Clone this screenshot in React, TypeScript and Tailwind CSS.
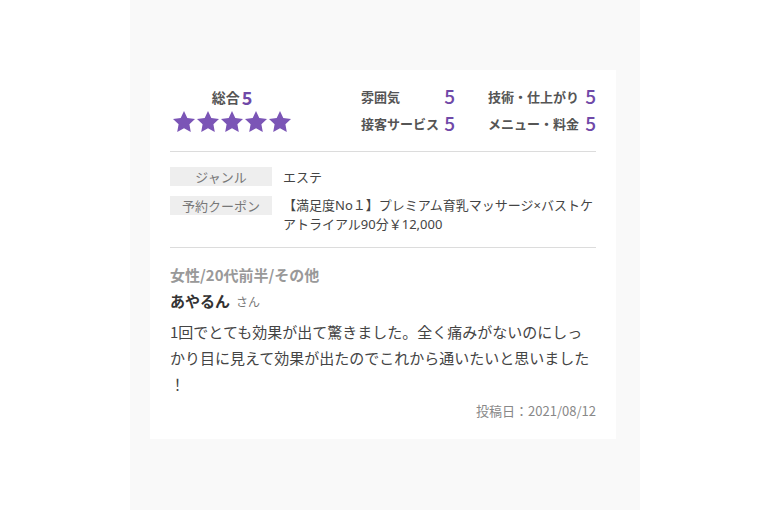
const FONT = { fontFamily: '"Noto Sans CJK JP", "Noto Sans", sans-serif' };
// Latin glyphs first so "×" and "No" come out narrow, as in the original
const MIXED_FONT = { fontFamily: '"Noto Sans", "Noto Sans CJK JP", sans-serif' };

const ratings = [
  { label: '雰囲気', score: 5 },
  { label: '技術・仕上がり', score: 5 },
  { label: '接客サービス', score: 5 },
  { label: 'メニュー・料金', score: 5 },
];

function StarIcon() {
  return (
    <svg viewBox="0 0 24 24" className="h-[24px] w-[24px]" aria-hidden>
      <polygon
        fill="#7b55b6"
        points="12,1 15.3,8 23,9 17.4,14.3 18.8,22 12,18.3 5.2,22 6.6,14.3 1,9 8.7,8"
      />
    </svg>
  );
}

export default function App() {
  return (
    <div className="flex min-h-[510px] w-full justify-center bg-white" style={FONT}>
      <div className="w-[510px] bg-[#f9f9f9] pt-[70px]">
        <div className="ml-5 w-[466px] bg-white px-5">
          {/* scores */}
          <div className="flex items-start border-b border-[#dcdcdc] pb-[14px] pt-[17px]">
            <div className="flex w-[124px] flex-col items-center">
              <div className="flex h-5 items-center">
                <span className="text-[14px] font-bold text-[#555]">総合</span>
                <span className="ml-[2px] text-[18px] font-semibold text-[#6f49a8]">5</span>
              </div>
              <div className="mt-[3px] flex">
                {[0, 1, 2, 3, 4].map((i) => (
                  <StarIcon key={i} />
                ))}
              </div>
            </div>
            <div className="-mt-1 ml-[67px] grid grid-cols-[94px_108px] gap-x-[33px]">
              {ratings.map((r) => (
                <div key={r.label} className="flex h-[27px] items-center justify-between">
                  <span className="text-[13px] font-bold text-[#555]">{r.label}</span>
                  <span className="text-[19px] font-medium text-[#6f49a8]">{r.score}</span>
                </div>
              ))}
            </div>
          </div>

          {/* genre / coupon */}
          <div className="flex flex-col gap-[10px] border-b border-[#dcdcdc] pb-[13px] pt-[15px] text-[13px] leading-[19px]">
            <div className="flex">
              <div className="w-[102px] shrink-0 bg-[#eeeeee] text-center text-[#777]">ジャンル</div>
              <div className="ml-[11px] text-[#444]">エステ</div>
            </div>
            <div className="flex">
              <div className="h-[19px] w-[102px] shrink-0 bg-[#eeeeee] text-center text-[#777]">予約クーポン</div>
              <div className="ml-[11px] text-[#444]" style={MIXED_FONT}>
                【満足度No１】プレミアム育乳マッサージ×バストケアトライアル90分￥12,000
              </div>
            </div>
          </div>

          {/* review */}
          <div className="pb-[19px] pt-[17px]">
            <div className="text-[15px] font-bold leading-5 text-[#999]">女性/20代前半/その他</div>
            <div className="mt-[6px] flex items-baseline leading-5">
              <span className="text-[15px] font-bold text-[#333]">あやるん</span>
              <span className="ml-[6px] text-[12px] text-[#777]">さん</span>
            </div>
            <p className="mt-[7px] text-[15px] leading-[26px] text-[#444] [line-break:anywhere]">
              1回でとても効果が出て驚きました。全く痛みがないのにしっかり目に見えて効果が出たのでこれから通いたいと思いました！
            </p>
            <div className="mt-[5px] text-right text-[13px] leading-[18px] text-[#888]">投稿日：2021/08/12</div>
          </div>
        </div>
      </div>
    </div>
  );
}
